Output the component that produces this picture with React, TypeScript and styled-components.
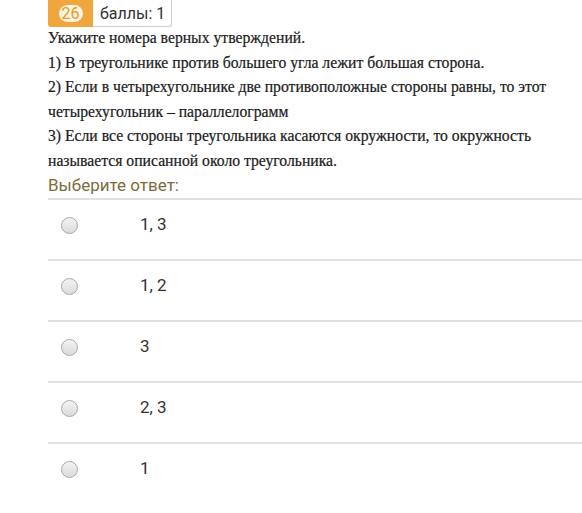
import React from 'react'
import styled, { createGlobalStyle } from 'styled-components'

const GlobalStyle = createGlobalStyle`
    html, body {
        margin: 0;
        padding: 0;
        background: #fff;
    }
`

const Page = styled.div`
    padding-left: 48px;
    width: 534px;
`

const InfoBar = styled.div`
    display: flex;
    align-items: stretch;
    height: 27px;
`

const Number = styled.div`
    display: flex;
    align-items: center;
    justify-content: center;
    width: 45px;
    background: #efa73d;
    border-radius: 0 0 0 3px;
`

const NumberPill = styled.span`
    display: inline-flex;
    align-items: center;
    justify-content: center;
    width: 24px;
    height: 17px;
    border-radius: 9px;
    background: #fdf3e0;
    color: #e79a26;
    font-family: Roboto, sans-serif;
    font-size: 16px;
    line-height: 1;
`

const Grade = styled.div`
    display: flex;
    align-items: center;
    padding: 0 6px 0 7px;
    border: 1px solid #ccc;
    border-top: none;
    border-left: none;
    border-radius: 0 0 3px 0;
    font-family: Roboto, sans-serif;
    font-size: 16px;
    color: #333;
`

const Question = styled.div`
    margin-top: -1px;
    font-family: "Liberation Serif", "DejaVu Serif", "Times New Roman", serif;
    font-size: 15.7px;
    line-height: 24.5px;
    color: #1a1a1a;
    -webkit-text-stroke: 0.2px #1a1a1a;

    p {
        margin: 0;
    }
`

const Prompt = styled.div`
    margin-top: 1px;
    font-family: Roboto, sans-serif;
    font-size: 17px;
    line-height: 22px;
    color: #7d6b3c;
    padding-bottom: 2px;
`

const Answers = styled.div`
    border-top: 2px solid #e2e2e2;
`

const Answer = styled.label`
    display: flex;
    align-items: flex-start;
    height: 61px;
    padding-top: 17px;
    box-sizing: border-box;
    border-bottom: 2px solid #e2e2e2;

    &:last-child {
        border-bottom: none;
    }
`

const Radio = styled.span`
    width: 17px;
    height: 17px;
    margin-left: 13px;
    border-radius: 50%;
    border: 1px solid #a9a9a9;
    background: linear-gradient(#f3f3f3, #dadada);
    box-sizing: border-box;
    flex-shrink: 0;
`

const AnswerText = styled.span`
    margin-left: 62px;
    margin-top: -3px;
    font-family: Roboto, sans-serif;
    font-size: 17px;
    color: #333;
`

const answers = ['1, 3', '1, 2', '3', '2, 3', '1']

const App = () => {
    return (
        <>
            <GlobalStyle />
            <Page>
                <InfoBar>
                    <Number><NumberPill>26</NumberPill></Number>
                    <Grade>баллы: 1</Grade>
                </InfoBar>
                <Question>
                    <p>Укажите номера верных утверждений.</p>
                    <p>1) В треугольнике против большего угла лежит большая сторона.</p>
                    <p>2) Если в четырехугольнике две противоположные стороны равны, то этот четырехугольник – параллелограмм</p>
                    <p>3) Если все стороны треугольника касаются окружности, то окружность называется описанной около треугольника.</p>
                </Question>
                <Prompt>Выберите ответ:</Prompt>
                <Answers>
                    {answers.map((a, i) => (
                        <Answer key={i}>
                            <Radio />
                            <AnswerText>{a}</AnswerText>
                        </Answer>
                    ))}
                </Answers>
            </Page>
        </>
    )
}

export default App
